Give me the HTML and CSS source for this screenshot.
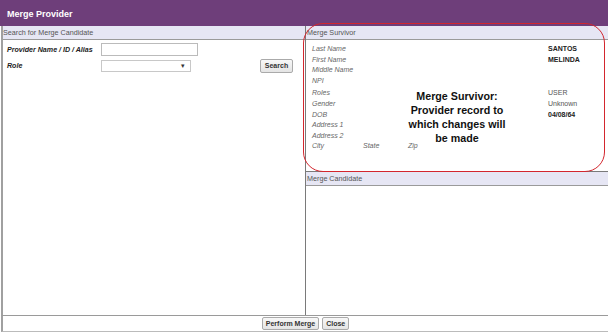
FILE: index.html
```html
<!DOCTYPE html>
<html>
<head>
<meta charset="utf-8">
<link rel="stylesheet" href="styles.css">
</head>
<body>
<div class="app">
  <div class="titlebar">Merge Provider</div>
  <div class="main">
    <div class="left">
      <div class="panel-head">Search for Merge Candidate</div>
      <div class="search-form">
        <div class="form-row">
          <label class="flabel">Provider Name / ID / Alias</label>
          <input class="text-input" type="text">
        </div>
        <div class="form-row">
          <label class="flabel">Role</label>
          <div class="select-box"><span class="arrow">&#9662;</span></div>
          <button class="btn search-btn">Search</button>
        </div>
      </div>
    </div>
    <div class="right">
      <div class="survivor">
        <div class="panel-head">Merge Survivor</div>
        <div class="rows">
          <div class="row"><span class="lbl">Last Name</span><span class="val bold">SANTOS</span></div>
          <div class="row"><span class="lbl">First Name</span><span class="val bold">MELINDA</span></div>
          <div class="row"><span class="lbl">Middle Name</span><span class="val"></span></div>
          <div class="row"><span class="lbl">NPI</span><span class="val"></span></div>
          <div class="row gap"><span class="lbl">Roles</span><span class="val">USER</span></div>
          <div class="row"><span class="lbl">Gender</span><span class="val">Unknown</span></div>
          <div class="row"><span class="lbl">DOB</span><span class="val bold">04/08/64</span></div>
          <div class="row"><span class="lbl">Address 1</span><span class="val"></span></div>
          <div class="row"><span class="lbl">Address 2</span><span class="val"></span></div>
          <div class="row"><span class="lbl city">City</span><span class="lbl state">State</span><span class="lbl zip">Zip</span></div>
        </div>
        <div class="callout">Merge Survivor:<br>Provider record to<br>which changes will<br>be made</div>
        <div class="ring"></div>
      </div>
      <div class="candidate">
        <div class="panel-head">Merge Candidate</div>
      </div>
    </div>
  </div>
  <div class="footer">
    <button class="btn">Perform Merge</button>
    <button class="btn">Close</button>
  </div>
</div>
</body>
</html>
```

FILE: styles.css
```css
* { box-sizing: border-box; }
html, body { margin: 0; padding: 0; background: #fff; }
body { font-family: "Liberation Sans", Arial, sans-serif; width: 608px; height: 332px; overflow: hidden; }

.app { display: flex; flex-direction: column; height: 332px; }

.titlebar {
  height: 26px; background: #6e3e7a; color: #fff;
  font-weight: bold; font-size: 9px; line-height: 29px; padding-left: 7px;
}

.main { display: flex; flex: 1; min-height: 0; border-left: 2px solid #a0a0a0; margin-left: 1px; }

.left { width: 303px; border-right: 1px solid #7a7a7a; display: flex; flex-direction: column; }
.right { flex: 1; display: flex; flex-direction: column; }

.panel-head {
  height: 14px; background: #e6e6f4; border-bottom: 1px solid #9a9a9a;
  font-size: 7.2px; color: #555; line-height: 13px; padding-left: 0px;
}
.right .panel-head { padding-left: 1px; }

.search-form { padding: 3px 12px 0 4px; display: flex; flex-direction: column; gap: 3px; }
.form-row { display: flex; align-items: center; height: 13px; }
.flabel { width: 94px; font-size: 7.1px; font-weight: bold; font-style: italic; color: #222; }
.text-input { width: 97px; height: 13px; border: 1px solid #bbb; padding: 0; margin: 0; }
.select-box {
  width: 90px; height: 12px; border: 1px solid #c8c8c8;
  display: flex; justify-content: flex-end; align-items: center; padding-right: 5px;
}
.arrow { font-size: 7px; color: #333; }

.btn {
  font-family: "Liberation Sans", Arial, sans-serif; font-size: 7px; font-weight: bold;
  color: #333; background: linear-gradient(#f8f8f8, #e4e4e4);
  border: 1px solid #aaa; border-radius: 2px; padding: 0 3px; height: 13px; line-height: 11px; margin: 0;
}
.search-btn { margin-left: auto; width: 33px; height: 14px; padding: 0; }

.survivor { position: relative; height: 145px; }
.rows { padding: 4px 0 0 6px; }
.row { display: flex; height: 10.6px; line-height: 10.6px; font-size: 7px; }
.row.gap { margin-top: 2px; }
.lbl { flex: 1; font-style: italic; color: #666; }
.val { width: 60px; color: #555; }
.val.bold { font-weight: bold; color: #222; }
.lbl.city { flex: 0 0 51px; }
.lbl.state { flex: 0 0 45px; }
.lbl.zip { flex: 1; }

.callout {
  position: absolute; left: 92px; top: 63px; width: 118px;
  text-align: center; font-size: 10.7px; font-weight: bold; line-height: 14px; color: #111;
}
.ring {
  position: absolute; left: -3px; top: -3px; width: 302px; height: 149px;
  border: 1.5px solid #d3262e; border-radius: 20px; pointer-events: none;
}

.candidate { flex: 1; border-top: 1px solid #7a7a7a; }

.footer {
  height: 17px; border-top: 1px solid #9a9a9a; border-bottom: 1px solid #bbb;
  border-left: 2px solid #a0a0a0; margin-left: 1px;
  display: flex; justify-content: center; align-items: center; gap: 3px;
}
```
